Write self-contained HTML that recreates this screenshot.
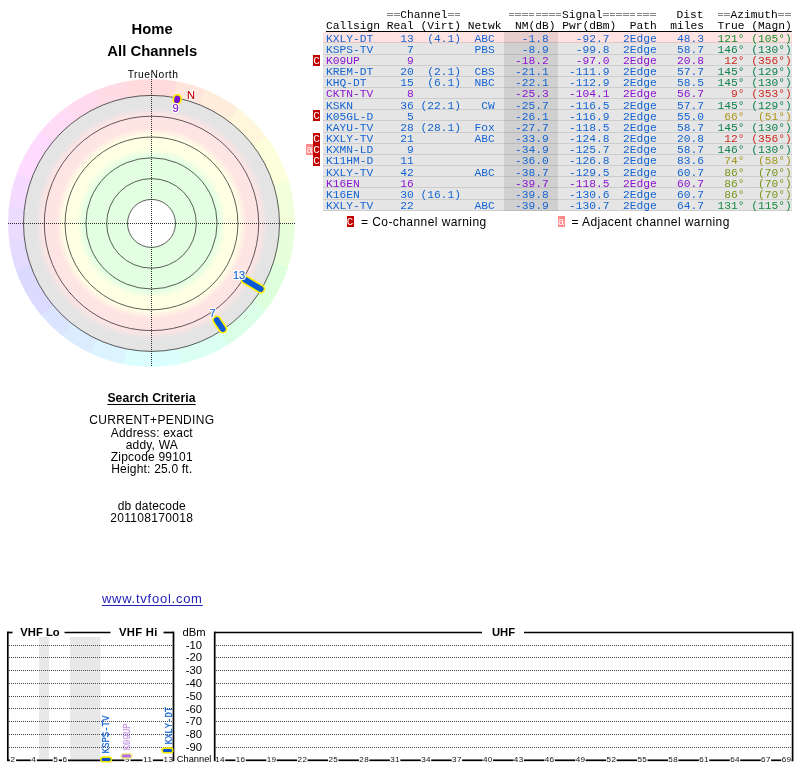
<!DOCTYPE html>
<html><head><meta charset="utf-8"><title>TV Fool</title>
<style>
html,body{margin:0;padding:0;background:#fff;}
body{width:800px;height:768px;position:relative;overflow:hidden;font-family:"Liberation Sans",sans-serif;color:#000;}
.abs{position:absolute;white-space:pre;}
.c{position:absolute;white-space:nowrap;transform:translateX(-50%);text-align:center;}
.mono{font-family:"Liberation Mono",monospace;font-size:11.25px;line-height:11.16px;white-space:pre;letter-spacing:-0.001px;}
.row{position:absolute;left:323.2px;width:469px;height:11.16px;box-sizing:border-box;}
.row.g{background:#e5e5e5;border-bottom:1px solid #cdcdcd;}
.row.p{background:#ffe2e2;border-bottom:1px solid #e6c4c4;}
.row span.t{position:absolute;left:3px;top:1.4px;}
.b{color:#1464d2;}
.v{color:#8a14d0;}
.fl{position:absolute;width:7px;height:11px;color:#fff;font-family:"Liberation Mono",monospace;font-size:11px;line-height:12px;text-align:center;overflow:hidden;}
.fc{background:#c00000;}
.fa{background:#ff8a8a;}
.q{display:inline-block;box-sizing:border-box;width:5.6px;margin:0 0.575px;height:3px;border-top:1px solid #858585;border-bottom:1px solid #858585;vertical-align:1.8px;}
svg{position:absolute;left:0;top:0;}
</style></head><body><div id="wrap" style="position:absolute;left:0;top:0;width:800px;height:768px;will-change:transform;">

<div style="position:absolute;left:7.7px;top:79.1px;width:287.6px;height:287.6px;border-radius:50%;background:conic-gradient(from -10deg,#ffdbdb 0deg 20deg,#ffe5db 20deg 32deg,#ffeddb 32deg 47deg,#fff6db 47deg 63deg,#fdffdb 63deg 83deg,#f2ffdb 83deg 100deg,#e8ffdb 100deg 118deg,#ddffdb 118deg 137deg,#dbffe6 137deg 158deg,#dbfff2 158deg 178deg,#dbffff 178deg 201deg,#dbf4ff 201deg 215deg,#dbecff 215deg 228deg,#dbe5ff 228deg 240deg,#dcdbff 240deg 261deg,#e5dbff 261deg 273deg,#eddbff 273deg 287deg,#f5dbff 287deg 300deg,#ffdbff 300deg 319deg,#ffdbf5 319deg 334deg,#ffdbed 334deg 347deg,#ffdbe5 347deg 360deg);"></div>
<svg width="800" height="768" viewBox="0 0 800 768">
<defs><radialGradient id="zg" gradientUnits="userSpaceOnUse" cx="151.5" cy="223.4" r="128">
<stop offset="0.0000" stop-color="#ffffff"/>
<stop offset="0.1875" stop-color="#ffffff"/>
<stop offset="0.1875" stop-color="#e2ffe2"/>
<stop offset="0.5234" stop-color="#e2ffe2"/>
<stop offset="0.5859" stop-color="#ffffe4"/>
<stop offset="0.6836" stop-color="#ffffe4"/>
<stop offset="0.7461" stop-color="#ffe4e4"/>
<stop offset="0.8477" stop-color="#ffe4e4"/>
<stop offset="0.9062" stop-color="#e4e4e4"/>
<stop offset="1.0000" stop-color="#e4e4e4"/>
</radialGradient></defs>
<circle cx="151.5" cy="223.4" r="128" fill="url(#zg)"/>
<circle cx="151.5" cy="223.4" r="24" fill="none" stroke="#2a2a2a" stroke-width="0.75"/>
<circle cx="151.5" cy="223.4" r="44.8" fill="none" stroke="#2a2a2a" stroke-width="0.75"/>
<circle cx="151.5" cy="223.4" r="65.6" fill="none" stroke="#2a2a2a" stroke-width="0.75"/>
<circle cx="151.5" cy="223.4" r="86.4" fill="none" stroke="#2a2a2a" stroke-width="0.75"/>
<circle cx="151.5" cy="223.4" r="107.2" fill="none" stroke="#2a2a2a" stroke-width="0.75"/>
<circle cx="151.5" cy="223.4" r="128" fill="none" stroke="#2a2a2a" stroke-width="0.75"/>
<line x1="151.5" y1="79" x2="151.5" y2="367" stroke="#1a1a1a" stroke-width="0.9" stroke-dasharray="1 1"/>
<line x1="8" y1="223.5" x2="296" y2="223.5" stroke="#1a1a1a" stroke-width="0.9" stroke-dasharray="1 1"/>
<line x1="245.2" y1="279.7" x2="260.7" y2="289.0" stroke="#ffee00" stroke-width="9.2" stroke-linecap="round"/>
<line x1="245.2" y1="279.7" x2="260.7" y2="289.0" stroke="#0a5ad7" stroke-width="5.8" stroke-linecap="round"/>
<line x1="216.8" y1="320.1" x2="222.7" y2="329.0" stroke="#ffee00" stroke-width="9.2" stroke-linecap="round"/>
<line x1="216.8" y1="320.1" x2="222.7" y2="329.0" stroke="#0a5ad7" stroke-width="5.8" stroke-linecap="round"/>
<line x1="177.0" y1="100.3" x2="177.4" y2="98.5" stroke="#ffee00" stroke-width="9.2" stroke-linecap="round"/>
<line x1="177.0" y1="100.3" x2="177.4" y2="98.5" stroke="#7a10d2" stroke-width="5.8" stroke-linecap="round"/>
</svg>
<div class="c" style="left:239px;top:269.5px;font-size:11px;line-height:11px;color:#1464d2;-webkit-text-stroke:0.15px #1464d2;text-shadow:-1px 0 #fff,1px 0 #fff,0 -1px #fff,0 1px #fff,-1px -1px #fff,1px 1px #fff,-1px 1px #fff,1px -1px #fff;">13</div>
<div class="c" style="left:212.5px;top:307.5px;font-size:11px;line-height:11px;color:#1464d2;-webkit-text-stroke:0.15px #1464d2;text-shadow:-1px 0 #fff,1px 0 #fff,0 -1px #fff,0 1px #fff,-1px -1px #fff,1px 1px #fff,-1px 1px #fff,1px -1px #fff;">7</div>
<div class="c" style="left:175.5px;top:102.5px;font-size:11px;line-height:11px;color:#8a14d0;-webkit-text-stroke:0.15px #8a14d0;text-shadow:-1px 0 #fff,1px 0 #fff,0 -1px #fff,0 1px #fff,-1px -1px #fff,1px 1px #fff,-1px 1px #fff,1px -1px #fff;">9</div>
<div class="c" style="left:191px;top:89.5px;font-size:11px;line-height:11px;color:#c80000;-webkit-text-stroke:0.15px #c80000;text-shadow:-1px 0 #fff,1px 0 #fff,0 -1px #fff,0 1px #fff,-1px -1px #fff,1px 1px #fff,-1px 1px #fff,1px -1px #fff;">N</div>
<div class="c" style="left:152.1px;top:21px;font-size:14.8px;line-height:17px;font-weight:bold;">Home</div>
<div class="c" style="left:152.3px;top:43px;font-size:14.85px;line-height:17px;font-weight:bold;">All Channels</div>
<div class="c" style="left:153.1px;top:69.3px;font-size:10.3px;line-height:12px;letter-spacing:0.55px;">TrueNorth</div>
<div class="c" style="left:151.5px;top:391px;font-size:12.2px;line-height:14px;letter-spacing:0.1px;font-weight:bold;text-decoration:underline;text-underline-offset:2.2px;text-decoration-thickness:1px;">Search Criteria</div>
<div class="c" style="left:151.8px;top:412.75px;font-size:12px;line-height:14px;letter-spacing:0.33px;">CURRENT+PENDING</div>
<div class="c" style="left:151.8px;top:426.00px;font-size:12px;line-height:14px;letter-spacing:0.2px;">Address: exact</div>
<div class="c" style="left:151.8px;top:437.90px;font-size:12px;line-height:14px;letter-spacing:0.2px;">addy, WA</div>
<div class="c" style="left:151.8px;top:449.90px;font-size:12px;line-height:14px;letter-spacing:0.2px;">Zipcode 99101</div>
<div class="c" style="left:151.8px;top:462.20px;font-size:12px;line-height:14px;letter-spacing:0.2px;">Height: 25.0 ft.</div>
<div class="c" style="left:151.8px;top:498.60px;font-size:12px;line-height:14px;letter-spacing:0.2px;">db datecode</div>
<div class="c" style="left:151.8px;top:511.40px;font-size:12px;line-height:14px;letter-spacing:0.33px;">201108170018</div>
<div class="c" style="left:152.3px;top:590.5px;font-size:13px;line-height:15px;letter-spacing:0.75px;text-underline-offset:2px;color:#2222bb;text-decoration:underline;">www.tvfool.com</div>
<div class="abs mono" style="left:326.0px;top:9.6px;">         <span class="q"></span><span class="q"></span>Channel<span class="q"></span><span class="q"></span>       <span class="q"></span><span class="q"></span><span class="q"></span><span class="q"></span><span class="q"></span><span class="q"></span><span class="q"></span><span class="q"></span>Signal<span class="q"></span><span class="q"></span><span class="q"></span><span class="q"></span><span class="q"></span><span class="q"></span><span class="q"></span><span class="q"></span>   Dist  <span class="q"></span><span class="q"></span>Azimuth<span class="q"></span><span class="q"></span></div>
<div class="abs mono" style="left:326.0px;top:20.8px;text-decoration:underline;text-underline-offset:1.5px;text-decoration-skip-ink:none;text-decoration-thickness:1px;">Callsign Real (Virt) Netwk  NM(dB) Pwr(dBm)  Path  miles  True (Magn)</div>
<div class="row p" style="top:32.20px;"></div>
<div class="row g" style="top:43.36px;"></div>
<div class="row g" style="top:54.52px;"></div>
<div class="fl fc" style="left:313px;top:54.52px;">C</div>
<div class="row g" style="top:65.68px;"></div>
<div class="row g" style="top:76.84px;"></div>
<div class="row g" style="top:88.00px;"></div>
<div class="row g" style="top:99.16px;"></div>
<div class="row g" style="top:110.32px;"></div>
<div class="fl fc" style="left:313px;top:110.32px;">C</div>
<div class="row g" style="top:121.48px;"></div>
<div class="row g" style="top:132.64px;"></div>
<div class="fl fc" style="left:313px;top:132.64px;">C</div>
<div class="row g" style="top:143.80px;"></div>
<div class="fl fc" style="left:313px;top:143.80px;">C</div>
<div class="fl fa" style="left:306px;top:143.80px;">a</div>
<div class="row g" style="top:154.96px;"></div>
<div class="fl fc" style="left:313px;top:154.96px;">C</div>
<div class="row g" style="top:166.12px;"></div>
<div class="row g" style="top:177.28px;"></div>
<div class="row g" style="top:188.44px;"></div>
<div class="row g" style="top:199.60px;"></div>
<div style="position:absolute;left:504px;top:32.2px;width:54px;height:178.6px;background:rgba(0,0,0,0.09);"></div>
<div class="abs mono b" style="left:326.0px;top:33.60px;">KXLY-DT    13  (4.1)  ABC    -1.8    -92.7  2Edge   48.3  <span style="color:#148c28">121° (105°)</span></div>
<div class="abs mono b" style="left:326.0px;top:44.76px;">KSPS-TV     7         PBS    -8.9    -99.8  2Edge   58.7  <span style="color:#0f8250">146° (130°)</span></div>
<div class="abs mono v" style="left:326.0px;top:55.92px;">K09UP       9               -18.2    -97.0  2Edge   20.8  <span style="color:#cc2a1e"> 12° (356°)</span></div>
<div class="abs mono b" style="left:326.0px;top:67.08px;">KREM-DT    20  (2.1)  CBS   -21.1   -111.9  2Edge   57.7  <span style="color:#0f8250">145° (129°)</span></div>
<div class="abs mono b" style="left:326.0px;top:78.24px;">KHQ-DT     15  (6.1)  NBC   -22.1   -112.9  2Edge   58.5  <span style="color:#0f8250">145° (130°)</span></div>
<div class="abs mono v" style="left:326.0px;top:89.40px;">CKTN-TV     8               -25.3   -104.1  2Edge   56.7  <span style="color:#cc2a1e">  9° (353°)</span></div>
<div class="abs mono b" style="left:326.0px;top:100.56px;">KSKN       36 (22.1)   CW   -25.7   -116.5  2Edge   57.7  <span style="color:#0f8250">145° (129°)</span></div>
<div class="abs mono b" style="left:326.0px;top:111.72px;">K05GL-D     5               -26.1   -116.9  2Edge   55.0  <span style="color:#af9619"> 66°  (51°)</span></div>
<div class="abs mono b" style="left:326.0px;top:122.88px;">KAYU-TV    28 (28.1)  Fox   -27.7   -118.5  2Edge   58.7  <span style="color:#0f8250">145° (130°)</span></div>
<div class="abs mono b" style="left:326.0px;top:134.04px;">KXLY-TV    21         ABC   -33.9   -124.8  2Edge   20.8  <span style="color:#cc2a1e"> 12° (356°)</span></div>
<div class="abs mono b" style="left:326.0px;top:145.20px;">KXMN-LD     9               -34.9   -125.7  2Edge   58.7  <span style="color:#0f8250">146° (130°)</span></div>
<div class="abs mono b" style="left:326.0px;top:156.36px;">K11HM-D    11               -36.0   -126.8  2Edge   83.6  <span style="color:#a09620"> 74°  (58°)</span></div>
<div class="abs mono b" style="left:326.0px;top:167.52px;">KXLY-TV    42         ABC   -38.7   -129.5  2Edge   60.7  <span style="color:#78961a"> 86°  (70°)</span></div>
<div class="abs mono v" style="left:326.0px;top:178.68px;">K16EN      16               -39.7   -118.5  2Edge   60.7  <span style="color:#78961a"> 86°  (70°)</span></div>
<div class="abs mono b" style="left:326.0px;top:189.84px;">K16EN      30 (16.1)        -39.8   -130.6  2Edge   60.7  <span style="color:#78961a"> 86°  (70°)</span></div>
<div class="abs mono b" style="left:326.0px;top:201.00px;">KXLY-TV    22         ABC   -39.9   -130.7  2Edge   64.7  <span style="color:#148a3c">131° (115°)</span></div>
<div class="fl fc" style="left:346.5px;top:215.5px;">C</div>
<div class="abs" style="left:361px;top:215px;font-size:12px;line-height:14px;letter-spacing:0.43px;">= Co-channel warning</div>
<div class="fl fa" style="left:557.5px;top:215.5px;">a</div>
<div class="abs" style="left:571.5px;top:215px;font-size:12px;line-height:14px;letter-spacing:0.43px;">= Adjacent channel warning</div>
<svg width="800" height="768" viewBox="0 0 800 768">
<rect x="39" y="637" width="10" height="122" fill="#e8e8e8"/>
<rect x="70" y="637" width="30.5" height="122" fill="#e8e8e8"/>
<line x1="9" y1="645.50" x2="173" y2="645.50" stroke="#484848" stroke-width="1" stroke-dasharray="1 1"/>
<line x1="216" y1="645.50" x2="792" y2="645.50" stroke="#484848" stroke-width="1" stroke-dasharray="1 1"/>
<line x1="9" y1="657.50" x2="173" y2="657.50" stroke="#484848" stroke-width="1" stroke-dasharray="1 1"/>
<line x1="216" y1="657.50" x2="792" y2="657.50" stroke="#484848" stroke-width="1" stroke-dasharray="1 1"/>
<line x1="9" y1="670.50" x2="173" y2="670.50" stroke="#484848" stroke-width="1" stroke-dasharray="1 1"/>
<line x1="216" y1="670.50" x2="792" y2="670.50" stroke="#484848" stroke-width="1" stroke-dasharray="1 1"/>
<line x1="9" y1="683.50" x2="173" y2="683.50" stroke="#484848" stroke-width="1" stroke-dasharray="1 1"/>
<line x1="216" y1="683.50" x2="792" y2="683.50" stroke="#484848" stroke-width="1" stroke-dasharray="1 1"/>
<line x1="9" y1="696.50" x2="173" y2="696.50" stroke="#484848" stroke-width="1" stroke-dasharray="1 1"/>
<line x1="216" y1="696.50" x2="792" y2="696.50" stroke="#484848" stroke-width="1" stroke-dasharray="1 1"/>
<line x1="9" y1="708.50" x2="173" y2="708.50" stroke="#484848" stroke-width="1" stroke-dasharray="1 1"/>
<line x1="216" y1="708.50" x2="792" y2="708.50" stroke="#484848" stroke-width="1" stroke-dasharray="1 1"/>
<line x1="9" y1="721.50" x2="173" y2="721.50" stroke="#484848" stroke-width="1" stroke-dasharray="1 1"/>
<line x1="216" y1="721.50" x2="792" y2="721.50" stroke="#484848" stroke-width="1" stroke-dasharray="1 1"/>
<line x1="9" y1="734.50" x2="173" y2="734.50" stroke="#484848" stroke-width="1" stroke-dasharray="1 1"/>
<line x1="216" y1="734.50" x2="792" y2="734.50" stroke="#484848" stroke-width="1" stroke-dasharray="1 1"/>
<line x1="9" y1="747.50" x2="173" y2="747.50" stroke="#484848" stroke-width="1" stroke-dasharray="1 1"/>
<line x1="216" y1="747.50" x2="792" y2="747.50" stroke="#484848" stroke-width="1" stroke-dasharray="1 1"/>
<line x1="7.8" y1="631.6" x2="7.8" y2="761.1999999999999" stroke="#000" stroke-width="1.7"/>
<line x1="173.5" y1="631.6" x2="173.5" y2="761.1999999999999" stroke="#000" stroke-width="1.7"/>
<line x1="7.8" y1="632.5" x2="12.5" y2="632.5" stroke="#000" stroke-width="1.7"/>
<line x1="64.5" y1="632.5" x2="110.5" y2="632.5" stroke="#000" stroke-width="1.7"/>
<line x1="163.5" y1="632.5" x2="173.5" y2="632.5" stroke="#000" stroke-width="1.7"/>
<line x1="7.8" y1="760.3" x2="9.9" y2="760.3" stroke="#000" stroke-width="1.7"/>
<line x1="16.1" y1="760.3" x2="30.7" y2="760.3" stroke="#000" stroke-width="1.7"/>
<line x1="36.8" y1="760.3" x2="52.7" y2="760.3" stroke="#000" stroke-width="1.7"/>
<line x1="58.8" y1="760.3" x2="62.0" y2="760.3" stroke="#000" stroke-width="1.7"/>
<line x1="68.0" y1="760.3" x2="102.5" y2="760.3" stroke="#000" stroke-width="1.7"/>
<line x1="108.6" y1="760.3" x2="124.4" y2="760.3" stroke="#000" stroke-width="1.7"/>
<line x1="130.5" y1="760.3" x2="142.5" y2="760.3" stroke="#000" stroke-width="1.7"/>
<line x1="152.9" y1="760.3" x2="163.2" y2="760.3" stroke="#000" stroke-width="1.7"/>
<line x1="214.7" y1="631.6" x2="214.7" y2="761.1999999999999" stroke="#000" stroke-width="1.7"/>
<line x1="792.6" y1="631.6" x2="792.6" y2="761.1999999999999" stroke="#000" stroke-width="1.7"/>
<line x1="214.7" y1="632.5" x2="482" y2="632.5" stroke="#000" stroke-width="1.7"/>
<line x1="524" y1="632.5" x2="792.6" y2="632.5" stroke="#000" stroke-width="1.7"/>
<line x1="214.7" y1="760.3" x2="214.8" y2="760.3" stroke="#000" stroke-width="1.7"/>
<line x1="225.2" y1="760.3" x2="235.4" y2="760.3" stroke="#000" stroke-width="1.7"/>
<line x1="245.8" y1="760.3" x2="266.3" y2="760.3" stroke="#000" stroke-width="1.7"/>
<line x1="276.7" y1="760.3" x2="297.2" y2="760.3" stroke="#000" stroke-width="1.7"/>
<line x1="307.6" y1="760.3" x2="328.1" y2="760.3" stroke="#000" stroke-width="1.7"/>
<line x1="338.5" y1="760.3" x2="359.0" y2="760.3" stroke="#000" stroke-width="1.7"/>
<line x1="369.4" y1="760.3" x2="389.9" y2="760.3" stroke="#000" stroke-width="1.7"/>
<line x1="400.3" y1="760.3" x2="420.8" y2="760.3" stroke="#000" stroke-width="1.7"/>
<line x1="431.2" y1="760.3" x2="451.7" y2="760.3" stroke="#000" stroke-width="1.7"/>
<line x1="462.1" y1="760.3" x2="482.6" y2="760.3" stroke="#000" stroke-width="1.7"/>
<line x1="493.0" y1="760.3" x2="513.5" y2="760.3" stroke="#000" stroke-width="1.7"/>
<line x1="523.9" y1="760.3" x2="544.4" y2="760.3" stroke="#000" stroke-width="1.7"/>
<line x1="554.8" y1="760.3" x2="575.3" y2="760.3" stroke="#000" stroke-width="1.7"/>
<line x1="585.7" y1="760.3" x2="606.2" y2="760.3" stroke="#000" stroke-width="1.7"/>
<line x1="616.6" y1="760.3" x2="637.1" y2="760.3" stroke="#000" stroke-width="1.7"/>
<line x1="647.5" y1="760.3" x2="668.0" y2="760.3" stroke="#000" stroke-width="1.7"/>
<line x1="678.4" y1="760.3" x2="698.9" y2="760.3" stroke="#000" stroke-width="1.7"/>
<line x1="709.3" y1="760.3" x2="729.8" y2="760.3" stroke="#000" stroke-width="1.7"/>
<line x1="740.2" y1="760.3" x2="760.7" y2="760.3" stroke="#000" stroke-width="1.7"/>
<line x1="771.1" y1="760.3" x2="781.3" y2="760.3" stroke="#000" stroke-width="1.7"/>
<line x1="791.7" y1="760.3" x2="792.6" y2="760.3" stroke="#000" stroke-width="1.7"/>
<text x="13" y="762.2" font-size="8.1" letter-spacing="0.35" text-anchor="middle" font-family="Liberation Sans, sans-serif" fill="#111">2</text>
<text x="33.8" y="762.2" font-size="8.1" letter-spacing="0.35" text-anchor="middle" font-family="Liberation Sans, sans-serif" fill="#111">4</text>
<text x="55.7" y="762.2" font-size="8.1" letter-spacing="0.35" text-anchor="middle" font-family="Liberation Sans, sans-serif" fill="#111">5</text>
<text x="65" y="762.2" font-size="8.1" letter-spacing="0.35" text-anchor="middle" font-family="Liberation Sans, sans-serif" fill="#111">6</text>
<text x="105.6" y="762.2" font-size="8.1" letter-spacing="0.35" text-anchor="middle" font-family="Liberation Sans, sans-serif" fill="#111">7</text>
<text x="127.4" y="762.2" font-size="8.1" letter-spacing="0.35" text-anchor="middle" font-family="Liberation Sans, sans-serif" fill="#111">9</text>
<text x="147.7" y="762.2" font-size="8.1" letter-spacing="0.35" text-anchor="middle" font-family="Liberation Sans, sans-serif" fill="#111">11</text>
<text x="168.4" y="762.2" font-size="8.1" letter-spacing="0.35" text-anchor="middle" font-family="Liberation Sans, sans-serif" fill="#111">13</text>
<text x="220.0" y="762.2" font-size="8.1" letter-spacing="0.35" text-anchor="middle" font-family="Liberation Sans, sans-serif" fill="#111">14</text>
<text x="240.6" y="762.2" font-size="8.1" letter-spacing="0.35" text-anchor="middle" font-family="Liberation Sans, sans-serif" fill="#111">16</text>
<text x="271.5" y="762.2" font-size="8.1" letter-spacing="0.35" text-anchor="middle" font-family="Liberation Sans, sans-serif" fill="#111">19</text>
<text x="302.4" y="762.2" font-size="8.1" letter-spacing="0.35" text-anchor="middle" font-family="Liberation Sans, sans-serif" fill="#111">22</text>
<text x="333.3" y="762.2" font-size="8.1" letter-spacing="0.35" text-anchor="middle" font-family="Liberation Sans, sans-serif" fill="#111">25</text>
<text x="364.2" y="762.2" font-size="8.1" letter-spacing="0.35" text-anchor="middle" font-family="Liberation Sans, sans-serif" fill="#111">28</text>
<text x="395.1" y="762.2" font-size="8.1" letter-spacing="0.35" text-anchor="middle" font-family="Liberation Sans, sans-serif" fill="#111">31</text>
<text x="426.0" y="762.2" font-size="8.1" letter-spacing="0.35" text-anchor="middle" font-family="Liberation Sans, sans-serif" fill="#111">34</text>
<text x="456.9" y="762.2" font-size="8.1" letter-spacing="0.35" text-anchor="middle" font-family="Liberation Sans, sans-serif" fill="#111">37</text>
<text x="487.8" y="762.2" font-size="8.1" letter-spacing="0.35" text-anchor="middle" font-family="Liberation Sans, sans-serif" fill="#111">40</text>
<text x="518.7" y="762.2" font-size="8.1" letter-spacing="0.35" text-anchor="middle" font-family="Liberation Sans, sans-serif" fill="#111">43</text>
<text x="549.6" y="762.2" font-size="8.1" letter-spacing="0.35" text-anchor="middle" font-family="Liberation Sans, sans-serif" fill="#111">46</text>
<text x="580.5" y="762.2" font-size="8.1" letter-spacing="0.35" text-anchor="middle" font-family="Liberation Sans, sans-serif" fill="#111">49</text>
<text x="611.4" y="762.2" font-size="8.1" letter-spacing="0.35" text-anchor="middle" font-family="Liberation Sans, sans-serif" fill="#111">52</text>
<text x="642.3" y="762.2" font-size="8.1" letter-spacing="0.35" text-anchor="middle" font-family="Liberation Sans, sans-serif" fill="#111">55</text>
<text x="673.2" y="762.2" font-size="8.1" letter-spacing="0.35" text-anchor="middle" font-family="Liberation Sans, sans-serif" fill="#111">58</text>
<text x="704.1" y="762.2" font-size="8.1" letter-spacing="0.35" text-anchor="middle" font-family="Liberation Sans, sans-serif" fill="#111">61</text>
<text x="735.0" y="762.2" font-size="8.1" letter-spacing="0.35" text-anchor="middle" font-family="Liberation Sans, sans-serif" fill="#111">64</text>
<text x="765.9" y="762.2" font-size="8.1" letter-spacing="0.35" text-anchor="middle" font-family="Liberation Sans, sans-serif" fill="#111">67</text>
<text x="786.5" y="762.2" font-size="8.1" letter-spacing="0.35" text-anchor="middle" font-family="Liberation Sans, sans-serif" fill="#111">69</text>
<line x1="103.15" y1="759.4" x2="109.15" y2="759.4" stroke="#f4e800" stroke-width="6.2" stroke-linecap="round"/>
<line x1="103.05000000000001" y1="759.4" x2="109.25" y2="759.4" stroke="#0a50c8" stroke-width="3" stroke-linecap="round"/>
<line x1="123.5" y1="756.05" x2="129.5" y2="756.05" stroke="#eeea90" stroke-width="6.2" stroke-linecap="round"/>
<line x1="123.4" y1="756.05" x2="129.6" y2="756.05" stroke="#b070e0" stroke-width="3" stroke-linecap="round"/>
<line x1="164.5" y1="750.4" x2="170.5" y2="750.4" stroke="#f4e800" stroke-width="6.2" stroke-linecap="round"/>
<line x1="164.4" y1="750.4" x2="170.6" y2="750.4" stroke="#0a50c8" stroke-width="3" stroke-linecap="round"/>
<text transform="translate(109.1 753.4) rotate(-90) scale(0.8 1)" font-size="11.25" font-family="Liberation Mono, monospace" stroke="#1464d2" stroke-width="0.25" fill="#1464d2">KSPS-TV</text>
<text transform="translate(130.0 750.3) rotate(-90) scale(0.8 1)" font-size="11.25" font-family="Liberation Mono, monospace" stroke="#c79be6" stroke-width="0.25" fill="#c79be6">K09UP</text>
<text transform="translate(171.8 744.5) rotate(-90) scale(0.8 1)" font-size="11.25" font-family="Liberation Mono, monospace" stroke="#1464d2" stroke-width="0.25" fill="#1464d2">KXLY-DT</text>
</svg>
<div class="abs" style="left:20.3px;top:626px;font-size:11.25px;line-height:12px;font-weight:bold;">VHF Lo</div>
<div class="abs" style="left:119px;top:626px;font-size:11.25px;line-height:12px;letter-spacing:0.3px;font-weight:bold;">VHF Hi</div>
<div class="abs" style="left:492px;top:626px;font-size:11.25px;line-height:12px;font-weight:bold;">UHF</div>
<div class="abs" style="left:182.6px;top:626px;font-size:11.25px;line-height:12px;">dBm</div>
<div class="abs" style="left:185.8px;top:638.60px;font-size:11.25px;line-height:12px;">-10</div>
<div class="abs" style="left:185.8px;top:651.38px;font-size:11.25px;line-height:12px;">-20</div>
<div class="abs" style="left:185.8px;top:664.16px;font-size:11.25px;line-height:12px;">-30</div>
<div class="abs" style="left:185.8px;top:676.94px;font-size:11.25px;line-height:12px;">-40</div>
<div class="abs" style="left:185.8px;top:689.72px;font-size:11.25px;line-height:12px;">-50</div>
<div class="abs" style="left:185.8px;top:702.50px;font-size:11.25px;line-height:12px;">-60</div>
<div class="abs" style="left:185.8px;top:715.28px;font-size:11.25px;line-height:12px;">-70</div>
<div class="abs" style="left:185.8px;top:728.06px;font-size:11.25px;line-height:12px;">-80</div>
<div class="abs" style="left:185.8px;top:740.84px;font-size:11.25px;line-height:12px;">-90</div>
<div class="abs" style="left:176.8px;top:753px;font-size:9.3px;line-height:12px;">Channel</div>
</div></body></html>
